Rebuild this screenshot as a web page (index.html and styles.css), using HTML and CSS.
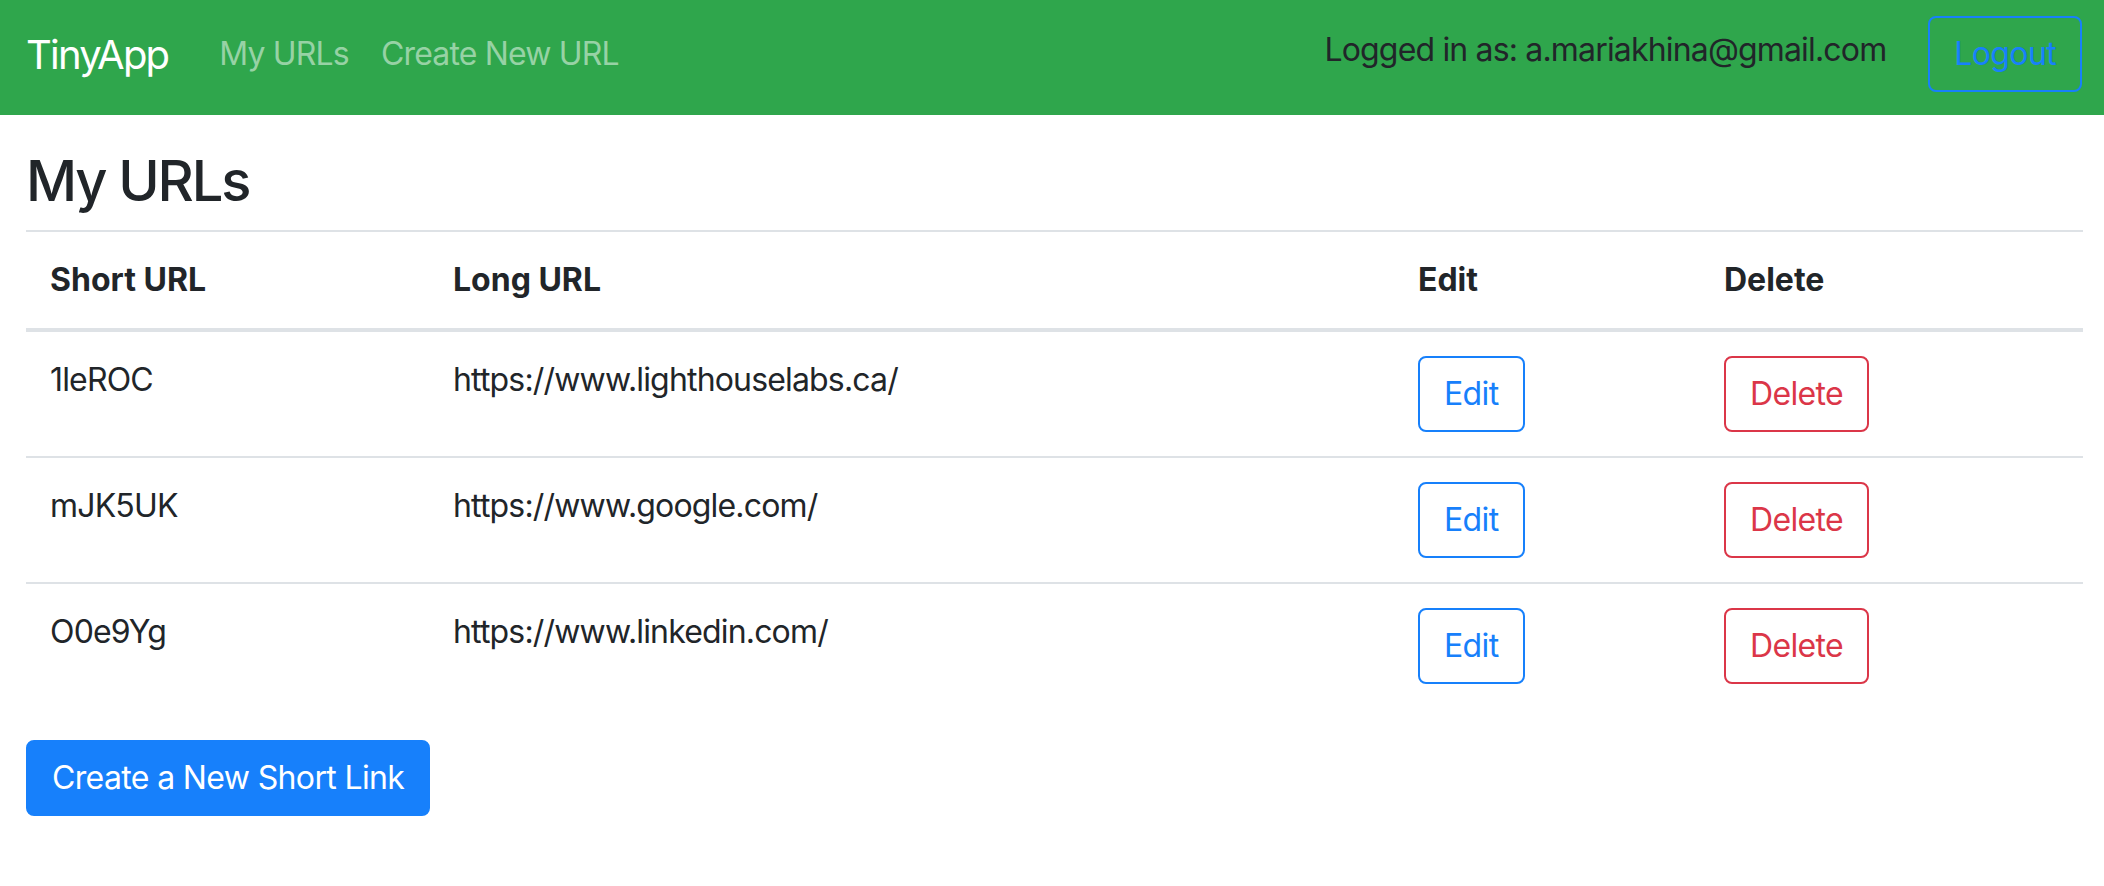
FILE: index.html
```html
<!DOCTYPE html>
<html lang="en">
<head>
<meta charset="utf-8">
<title>TinyApp</title>
<link rel="stylesheet" href="styles.css">
</head>
<body>
<nav class="navbar">
  <a class="brand" href="#">TinyApp</a>
  <div class="nav-links">
    <a class="nav-link" href="#">My URLs</a>
    <a class="nav-link" href="#">Create New URL</a>
  </div>
  <div class="nav-right">
    <span class="nav-text">Logged in as: a.mariakhina@gmail.com</span>
    <button class="btn btn-outline-primary logout">Logout</button>
  </div>
</nav>
<main class="container">
  <h1 class="title">My URLs</h1>
  <table class="table">
    <thead>
      <tr>
        <th class="col-short">Short URL</th>
        <th class="col-long">Long URL</th>
        <th class="col-edit">Edit</th>
        <th class="col-delete">Delete</th>
      </tr>
    </thead>
    <tbody>
      <tr>
        <td>1leROC</td>
        <td>https://www.lighthouselabs.ca/</td>
        <td><button class="btn btn-outline-primary">Edit</button></td>
        <td><button class="btn btn-outline-danger">Delete</button></td>
      </tr>
      <tr>
        <td>mJK5UK</td>
        <td>https://www.google.com/</td>
        <td><button class="btn btn-outline-primary">Edit</button></td>
        <td><button class="btn btn-outline-danger">Delete</button></td>
      </tr>
      <tr>
        <td>O0e9Yg</td>
        <td>https://www.linkedin.com/</td>
        <td><button class="btn btn-outline-primary">Edit</button></td>
        <td><button class="btn btn-outline-danger">Delete</button></td>
      </tr>
    </tbody>
  </table>
  <button class="btn btn-primary">Create a New Short Link</button>
</main>
</body>
</html>
```
FILE: styles.css
```css
* { box-sizing: border-box; }
html, body { margin: 0; padding: 0; }
body {
  font-family: Inter, "Liberation Sans", sans-serif;
  font-size: 32px;
  line-height: 48px;
  letter-spacing: -0.026em;
  color: #212529;
  background: #fff;
  width: 2104px;
}
a { text-decoration: none; }

.navbar {
  display: flex;
  align-items: flex-start;
  height: 115px;
  padding: 0 22px 0 26px;
  background: #2fa64c;
}
.brand {
  font-size: 40px;
  line-height: 60px;
  letter-spacing: -0.045em;
  margin-top: 25px;
  margin-right: 35px;
  color: #fff;
}
.nav-links { display: flex; margin-top: 30px; }
.nav-link {
  padding: 0 16px;
  color: #97d2a5;
}
.nav-right {
  margin-left: auto;
  display: flex;
  align-items: flex-start;
}
.nav-text {
  margin-top: 26px;
  margin-right: 42px;
  color: #212529;
}
.logout { margin-top: 16px; }

.btn {
  font-family: inherit;
  font-size: 32px;
  line-height: 48px;
  letter-spacing: -0.02em;
  padding: 12px 24px;
  border: 2px solid transparent;
  border-radius: 8px;
  background: transparent;
  cursor: pointer;
}
.btn-outline-primary { color: #1780fb; border-color: #1780fb; }
.btn-outline-danger { color: #db3648; border-color: #db3648; }
.btn-primary { color: #fff; background: #1780fb; border-color: #1780fb; }

.container { padding: 33px 21px 0 26px; }
.title {
  font-size: 56px;
  line-height: 67px;
  font-weight: 500;
  letter-spacing: -0.038em;
  margin: 0 0 15px;
}
.table {
  width: 100%;
  border-collapse: collapse;
  table-layout: fixed;
  margin-bottom: 32px;
}
.table th, .table td {
  padding: 24px;
  text-align: left;
  vertical-align: top;
  border-top: 2px solid #dee2e6;
}
.table th {
  font-weight: 700;
  letter-spacing: 0;
  border-bottom: 4px solid #dee2e6;
}
.col-short { width: 403px; }
.col-long { width: 965px; }
.col-edit { width: 306px; }
.col-delete { width: 383px; }
```
